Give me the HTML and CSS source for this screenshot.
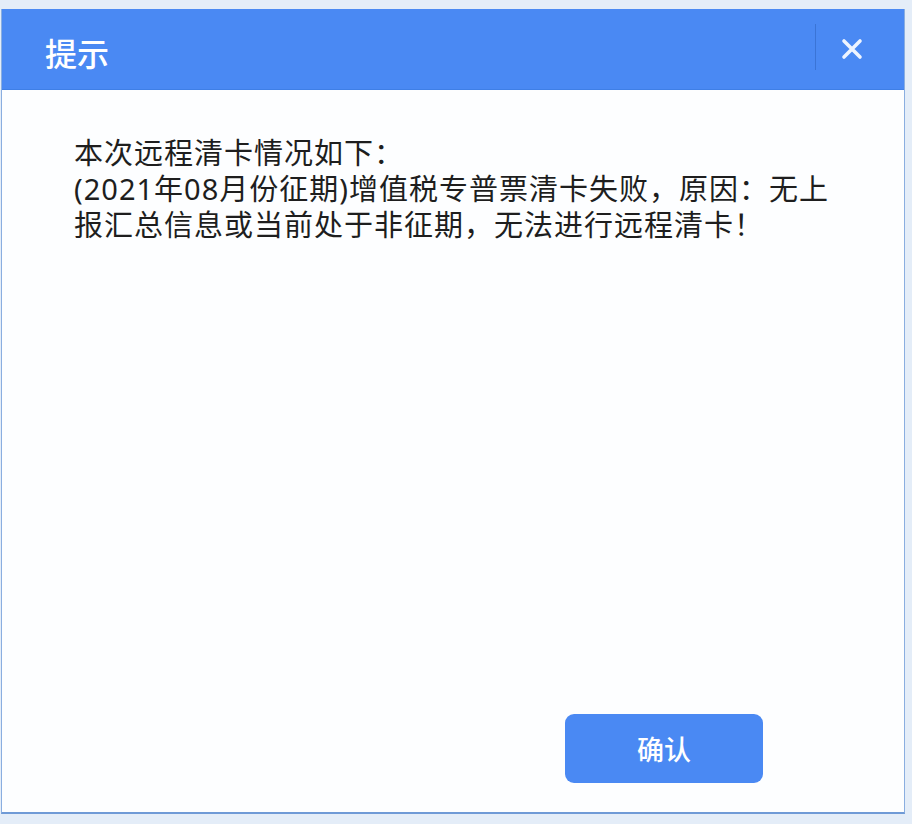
FILE: index.html
```html
<!DOCTYPE html>
<html lang="zh-CN">
<head>
    <meta charset="UTF-8">
    <title>提示</title>
    <link rel="stylesheet" href="styles.css">
</head>
<body>
    <div class="dialog">
        <div class="dialog-header">
            <span class="dialog-title">提示</span>
            <span class="header-sep"></span>
            <button class="close-btn" type="button" aria-label="关闭">
                <svg width="22" height="22" viewBox="0 0 22 22">
                    <path d="M3 3L19 19M19 3L3 19" stroke="#eef4ff" stroke-width="3.6" stroke-linecap="round"/>
                </svg>
            </button>
        </div>
        <div class="dialog-body">
            <p class="message">本次远程清卡情况如下：<br>(2021年08月份征期)增值税专普票清卡失败，原因：无上报汇总信息或当前处于非征期，无法进行远程清卡！</p>
        </div>
        <div class="dialog-footer">
            <button class="confirm-btn" type="button">确认</button>
        </div>
    </div>
</body>
</html>
```

FILE: styles.css
```css
body {
    margin: 0;
    background-color: #e4edf8;
    font-family: "Noto Sans", "Noto Sans CJK SC", sans-serif;
}
.dialog {
    box-sizing: border-box;
    width: 904px;
    height: 805px;
    margin: 9px 0 0 1px;
    display: flex;
    flex-direction: column;
    background: #fdfeff;
    border: 1px solid #8aaee0;
    border-top: none;
    border-bottom: 2px solid #6f9ad6;
}
.dialog-header {
    height: 81px;
    flex-shrink: 0;
    display: flex;
    align-items: center;
    background-color: #4a89f3;
    border-bottom: 1px solid #3f7fe6;
    box-sizing: border-box;
}
.dialog-title {
    flex: 1;
    padding-left: 43px;
    padding-top: 6px;
    color: #fff;
    font-size: 32px;
    font-weight: 500;
}
.header-sep {
    width: 1px;
    height: 46px;
    margin-top: -4px;
    background: #3a74d6;
}
.close-btn {
    width: 72px;
    height: 60px;
    padding: 0;
    border: none;
    background: none;
    display: flex;
    align-items: center;
    justify-content: center;
    cursor: pointer;
    margin-right: 16px;
}
.dialog-body {
    flex: 1;
    padding: 45px 40px 0 72px;
}
.message {
    margin: 0;
    width: 780px;
    font-size: 29px;
    line-height: 36px;
    color: #1e1e1e;
    letter-spacing: 1px;
}
.dialog-footer {
    display: flex;
    justify-content: flex-end;
    padding: 0 141px 29px 0;
}
.confirm-btn {
    width: 198px;
    height: 69px;
    border: none;
    border-radius: 9px;
    background-color: #4a89f3;
    color: #fff;
    font-family: "Noto Sans CJK SC", sans-serif;
    font-size: 27px;
    font-weight: 500;
    cursor: pointer;
}
```
